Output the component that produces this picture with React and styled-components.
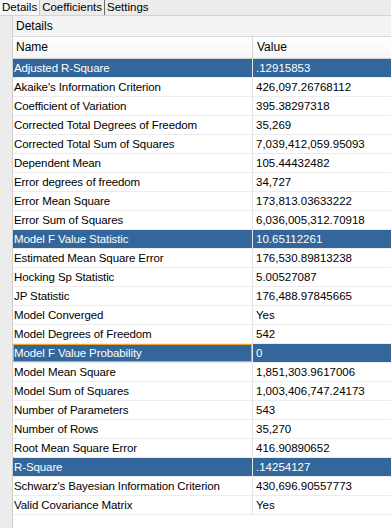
import React from "react";
import styled, { createGlobalStyle } from "styled-components";

const rows = [
  ["Adjusted R-Square", ".12915853", "selected"],
  ["Akaike's Information Criterion", "426,097.26768112"],
  ["Coefficient of Variation", "395.38297318"],
  ["Corrected Total Degrees of Freedom", "35,269"],
  ["Corrected Total Sum of Squares", "7,039,412,059.95093"],
  ["Dependent Mean", "105.44432482"],
  ["Error degrees of freedom", "34,727"],
  ["Error Mean Square", "173,813.03633222"],
  ["Error Sum of Squares", "6,036,005,312.70918"],
  ["Model F Value Statistic", "10.65112261", "selected"],
  ["Estimated Mean Square Error", "176,530.89813238"],
  ["Hocking Sp Statistic", "5.00527087"],
  ["JP Statistic", "176,488.97845665"],
  ["Model Converged", "Yes"],
  ["Model Degrees of Freedom", "542"],
  ["Model F Value Probability", "0", "focused"],
  ["Model Mean Square", "1,851,303.9617006"],
  ["Model Sum of Squares", "1,003,406,747.24173"],
  ["Number of Parameters", "543"],
  ["Number of Rows", "35,270"],
  ["Root Mean Square Error", "416.90890652"],
  ["R-Square", ".14254127", "selected"],
  ["Schwarz's Bayesian Information Criterion", "430,696.90557773"],
  ["Valid Covariance Matrix", "Yes"],
];

const tabs = ["Details", "Coefficients", "Settings"];

const App = () => {
  return (
    <>
      <GlobalStyle />
      <Window>
        <TabStrip>
          {tabs.map((t, i) => (
            <Tab key={t} active={i === 0}>
              {t}
            </Tab>
          ))}
        </TabStrip>
        <Body>
          <Gutter />
          <Panel>
            <PanelTitle>Details</PanelTitle>
            <HeaderRow>
              <HeaderCell>Name</HeaderCell>
              <HeaderCell divider>Value</HeaderCell>
            </HeaderRow>
            {rows.map(([name, value, state]) => (
              <Row key={name} selected={!!state}>
                <NameCell focused={state === "focused"}>{name}</NameCell>
                <ValueCell>{value}</ValueCell>
              </Row>
            ))}
          </Panel>
        </Body>
      </Window>
    </>
  );
};

export default App;

const GlobalStyle = createGlobalStyle`
  html, body {
    margin: 0;
    padding: 0;
    background: #ececec;
  }
  body {
    font-family: "Liberation Sans", Arial, sans-serif;
    font-size: 11px;
    color: #000;
  }
`;

const Window = styled.div`
  width: 391px;
  height: 528px;
  overflow: hidden;
  display: flex;
  flex-direction: column;
  background: #ececec;
`;

const TabStrip = styled.div`
  display: flex;
  height: 15px;
  border-bottom: 1px solid #d4d4d4;
  background: #ececec;
`;

const Tab = styled.div`
  padding: 0 2px;
  line-height: 15px;
  font-size: 11.5px;
  background: ${(p) => (p.active ? "#f7f7f7" : "transparent")};
  border-right: 1px solid ${(p) => (p.active ? "#c8c8c8" : "#6a6a6a")};
  &:last-child {
    border-right: none;
  }
`;

const Body = styled.div`
  flex: 1;
  display: flex;
`;

const Gutter = styled.div`
  width: 12px;
  background: #ececec;
`;

const Panel = styled.div`
  flex: 1;
  background: #fff;
  border-left: 1px solid #cfcfcf;
`;

const PanelTitle = styled.div`
  height: 20px;
  line-height: 20px;
  padding-left: 3px;
  font-size: 12px;
  background: #f3f3f3;
  border-bottom: 1px solid #d8d8d8;
`;

const HeaderRow = styled.div`
  display: grid;
  grid-template-columns: 239px 1fr;
  height: 21px;
  background: linear-gradient(#ffffff, #f6f6f6);
  border-bottom: 1px solid #d2d2d2;
`;

const HeaderCell = styled.div`
  line-height: 21px;
  padding-left: ${(p) => (p.divider ? "4px" : "3px")};
  font-size: 12px;
  border-left: ${(p) => (p.divider ? "1px solid #d8d8d8" : "none")};
`;

const Row = styled.div`
  display: grid;
  grid-template-columns: 239px 1fr;
  height: 19px;
  box-sizing: border-box;
  border-bottom: 1px solid #ececec;
  background: ${(p) => (p.selected ? "#33669a" : "#fff")};
  color: ${(p) => (p.selected ? "#fff" : "#000")};
`;

const NameCell = styled.div`
  white-space: nowrap;
  overflow: hidden;
  box-sizing: border-box;
  font-size: 11.5px;
  letter-spacing: -0.1px;
  border: ${(p) => (p.focused ? "1px solid #f0a430" : "none")};
  line-height: ${(p) => (p.focused ? "16px" : "18px")};
  padding-left: ${(p) => (p.focused ? "0" : "1px")};
`;

const ValueCell = styled.div`
  line-height: 18px;
  padding-left: 3px;
  font-size: 11.5px;
  white-space: nowrap;
  border-left: 1px solid #e6e6e6;
`;
